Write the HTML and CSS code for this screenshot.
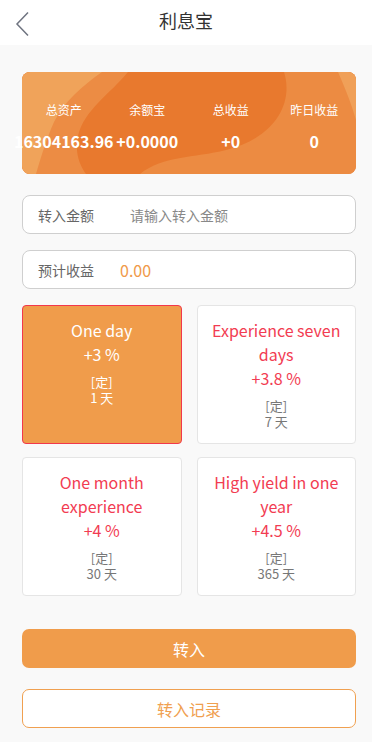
FILE: index.html
```html
<!DOCTYPE html>
<html lang="zh-CN">
<head>
    <meta charset="UTF-8">
    <meta name="viewport" content="width=device-width, initial-scale=1.0">
    <title>利息宝</title>
    <link rel="stylesheet" href="styles.css">
</head>
<body>
    <div class="header">
        <a class="back" href="#">
            <svg width="20" height="30" viewBox="0 0 20 30">
                <polyline points="13,3.5 2,15 13,26.5" fill="none" stroke="#6f7480" stroke-width="1.5"/>
            </svg>
        </a>
        <h1>利息宝</h1>
        <span></span>
    </div>

    <div class="page">
        <div class="banner">
            <svg class="banner-bg" viewBox="0 0 334 102" preserveAspectRatio="none">
                <rect width="334" height="102" fill="#e8792e"/>
                <path d="M0,0 H106 C88,22 62,38 56,64 C52,84 60,96 64,102 H0 Z" fill="#ec8c44"/>
                <path d="M0,0 H80 C60,14 42,30 32,50 C24,68 18,88 14,102 H0 Z" fill="#f0a35a"/>
                <path d="M262,0 C272,32 252,66 204,78 C172,86 140,84 118,102 H334 V0 Z" fill="#ec8b42"/>
                <path d="M316,0 C324,18 330,34 334,48 V0 Z" fill="#f0a058"/>
            </svg>
            <div class="stat">
                <span class="stat-label">总资产</span>
                <span class="stat-value">16304163.96</span>
            </div>
            <div class="stat">
                <span class="stat-label">余额宝</span>
                <span class="stat-value">+0.0000</span>
            </div>
            <div class="stat">
                <span class="stat-label">总收益</span>
                <span class="stat-value">+0</span>
            </div>
            <div class="stat">
                <span class="stat-label">昨日收益</span>
                <span class="stat-value">0</span>
            </div>
        </div>

        <div class="field">
            <label class="field-label wide" for="amount">转入金额</label>
            <input type="text" id="amount" placeholder="请输入转入金额">
        </div>

        <div class="field">
            <span class="field-label">预计收益</span>
            <span class="field-value">0.00</span>
        </div>

        <div class="plans">
            <div class="plan active">
                <div class="plan-name">One day</div>
                <div class="plan-rate">+3 %</div>
                <div class="plan-type">[定]</div>
                <div class="plan-days">1 天</div>
            </div>
            <div class="plan">
                <div class="plan-name">Experience seven days</div>
                <div class="plan-rate">+3.8 %</div>
                <div class="plan-type">[定]</div>
                <div class="plan-days">7 天</div>
            </div>
            <div class="plan">
                <div class="plan-name">One month experience</div>
                <div class="plan-rate">+4 %</div>
                <div class="plan-type">[定]</div>
                <div class="plan-days">30 天</div>
            </div>
            <div class="plan">
                <div class="plan-name">High yield in one year</div>
                <div class="plan-rate">+4.5 %</div>
                <div class="plan-type">[定]</div>
                <div class="plan-days">365 天</div>
            </div>
        </div>

        <button class="btn btn-primary">转入</button>
        <button class="btn btn-outline">转入记录</button>
    </div>
</body>
</html>
```

FILE: styles.css
```css
body {
    margin: 0;
    background-color: #f9f9f9;
    font-family: "Noto Sans CJK SC", "Noto Sans", sans-serif;
    color: #333;
}
.header {
    height: 45px;
    background-color: #fff;
    display: grid;
    grid-template-columns: 45px 1fr 45px;
    align-items: center;
}
.back {
    display: flex;
    padding-left: 15px;
    padding-top: 2px;
}
.header h1 {
    margin: 0;
    text-align: center;
    font-size: 18px;
    font-weight: normal;
    line-height: 45px;
    margin-top: -5px;
}
.page {
    padding: 27px 16px 14px 22px;
    display: flex;
    flex-direction: column;
}
.banner {
    position: relative;
    height: 102px;
    border-radius: 8px;
    display: flex;
    color: #fff;
}
.banner-bg {
    position: absolute;
    left: 0;
    top: 0;
    width: 100%;
    height: 100%;
    border-radius: 8px;
    z-index: 0;
}
.stat {
    position: relative;
    flex: 1;
    min-width: 0;
    display: flex;
    flex-direction: column;
    align-items: center;
    padding-top: 30px;
}
.stat-label {
    font-size: 12px;
    line-height: 16px;
}
.stat-value {
    margin-top: 13px;
    font-size: 16px;
    font-weight: bold;
    line-height: 20px;
    white-space: nowrap;
}
.field {
    margin-top: 21px;
    height: 37px;
    border: 1px solid #cfcfcf;
    border-radius: 8px;
    background-color: #fff;
    display: flex;
    align-items: center;
    padding-left: 15px;
}
.field + .field {
    margin-top: 16px;
}
.field-label {
    font-size: 14px;
    color: #666;
    margin-right: 26px;
}
.field-label.wide {
    margin-right: 36px;
}
.field input {
    flex: 1;
    border: none;
    outline: none;
    padding: 0;
    background: transparent;
    font-family: inherit;
    font-size: 14px;
    color: #333;
}
.field input::placeholder {
    color: #888;
}
.field-value {
    font-size: 16px;
    color: #f09a4a;
}
.plans {
    margin-top: 16px;
    display: grid;
    grid-template-columns: 1fr 1fr;
    column-gap: 15px;
    row-gap: 13px;
}
.plan {
    background-color: #fff;
    border: 1px solid #e5e5e5;
    border-radius: 4px;
    padding: 12px 10px 13px;
    text-align: center;
    color: #f23c52;
}
.plan.active {
    background-color: #f09c4b;
    border-color: #f2384c;
    color: #fff;
}
.plan-name,
.plan-rate {
    font-size: 16px;
    line-height: 24px;
}
.plan-type {
    margin-top: 8px;
}
.plan-type,
.plan-days {
    font-size: 13px;
    line-height: 16px;
    color: #777;
}
.plan.active .plan-type,
.plan.active .plan-days {
    color: #fff;
}
.btn {
    height: 39px;
    border-radius: 7px;
    font-family: inherit;
    font-size: 16px;
    cursor: pointer;
}
.btn-primary {
    margin-top: 33px;
    background-color: #f09c4b;
    border: none;
    color: #fff;
}
.btn-outline {
    margin-top: 21px;
    background-color: #fff;
    border: 1px solid #f0a050;
    color: #f0a050;
}
```
